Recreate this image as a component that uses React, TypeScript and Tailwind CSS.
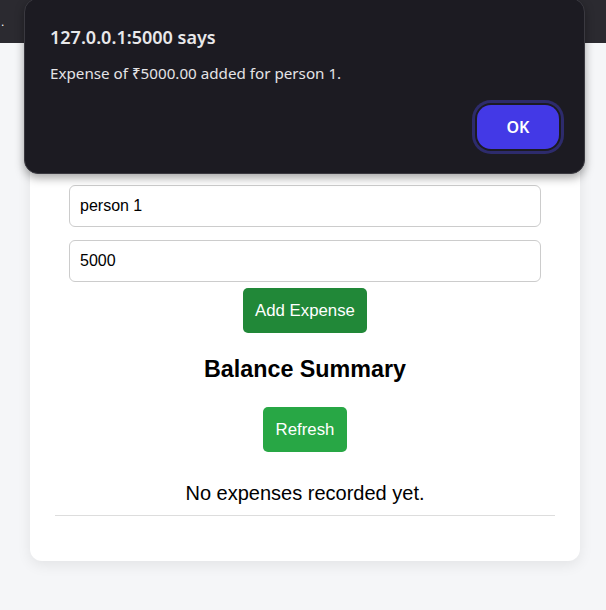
import React from "react";

export default function App() {
  return (
    <div className="relative min-h-[610px] w-full overflow-hidden bg-[#f5f6f8] font-['Liberation_Sans',Arial,sans-serif]">
      <div className="flex h-[43px] items-center bg-[#2b2a30] pl-[1px]">
        <span className="text-[12px] leading-none text-white">.</span>
      </div>

      <div className="ml-[30px] mt-[20px] flex w-[550px] flex-col items-center rounded-[12px] bg-white px-[25px] pb-[45px] pt-[25px] shadow-[0_4px_14px_rgba(0,0,0,0.08)]">
        <div className="flex h-[97px] flex-col items-center justify-center gap-2">
          <h1 className="text-[28px] font-bold text-black">Expense Splitter</h1>
          <h3 className="text-[20px] font-bold text-black">Add Expense</h3>
        </div>
        <input
          readOnly
          value="person 1"
          className="h-[42px] w-[472px] rounded-[6px] border border-[#cccccc] bg-white px-[10px] text-[16px] text-black outline-none"
        />
        <input
          readOnly
          value="5000"
          className="mt-[13px] h-[42px] w-[472px] rounded-[6px] border border-[#cccccc] bg-white px-[10px] text-[16px] text-black outline-none"
        />
        <button className="mt-[6px] flex h-[45px] w-[124px] items-center justify-center rounded-[5px] bg-[#218838] text-[16.8px] text-white">
          Add Expense
        </button>
        <h3 className="mt-[22px] h-[28px] text-[23.3px] font-bold leading-[28px] text-black">
          Balance Summary
        </h3>
        <button className="mt-[24px] flex h-[45px] w-[84px] items-center justify-center rounded-[5px] bg-[#28a745] text-[16.8px] text-white">
          Refresh
        </button>
        <p className="mt-[29px] h-[24px] text-[20px] leading-[24px] text-black">
          No expenses recorded yet.
        </p>
        <div className="mt-[10px] h-px w-[500px] bg-[#dddddd]" />
      </div>

      <div className="absolute left-[24px] top-[-2px] flex h-[176px] w-[561px] flex-col rounded-[14px] border border-[#3a3940] bg-[#1c1b22] px-[25px] shadow-[0_4px_10px_rgba(0,0,0,0.35)] font-['Noto_Sans','Open_Sans',sans-serif]">
        <div className="mt-[26px] text-[18px] font-semibold leading-[24px] text-[#e8e8ea]">
          127.0.0.1:5000 says
        </div>
        <div className="mt-[14px] text-[15.2px] leading-[20px] text-[#e4e4e6]">
          Expense of ₹5000.00 added for person 1.
        </div>
        <div className="mt-auto mb-[24px] flex justify-end">
          <button className="flex h-[44px] w-[82px] items-center justify-center rounded-[14px] bg-[#4339e6] text-[16px] font-semibold text-white shadow-[0_0_0_2px_#1c1b22,0_0_0_5px_#2d2b6c]">
            OK
          </button>
        </div>
      </div>
    </div>
  );
}
